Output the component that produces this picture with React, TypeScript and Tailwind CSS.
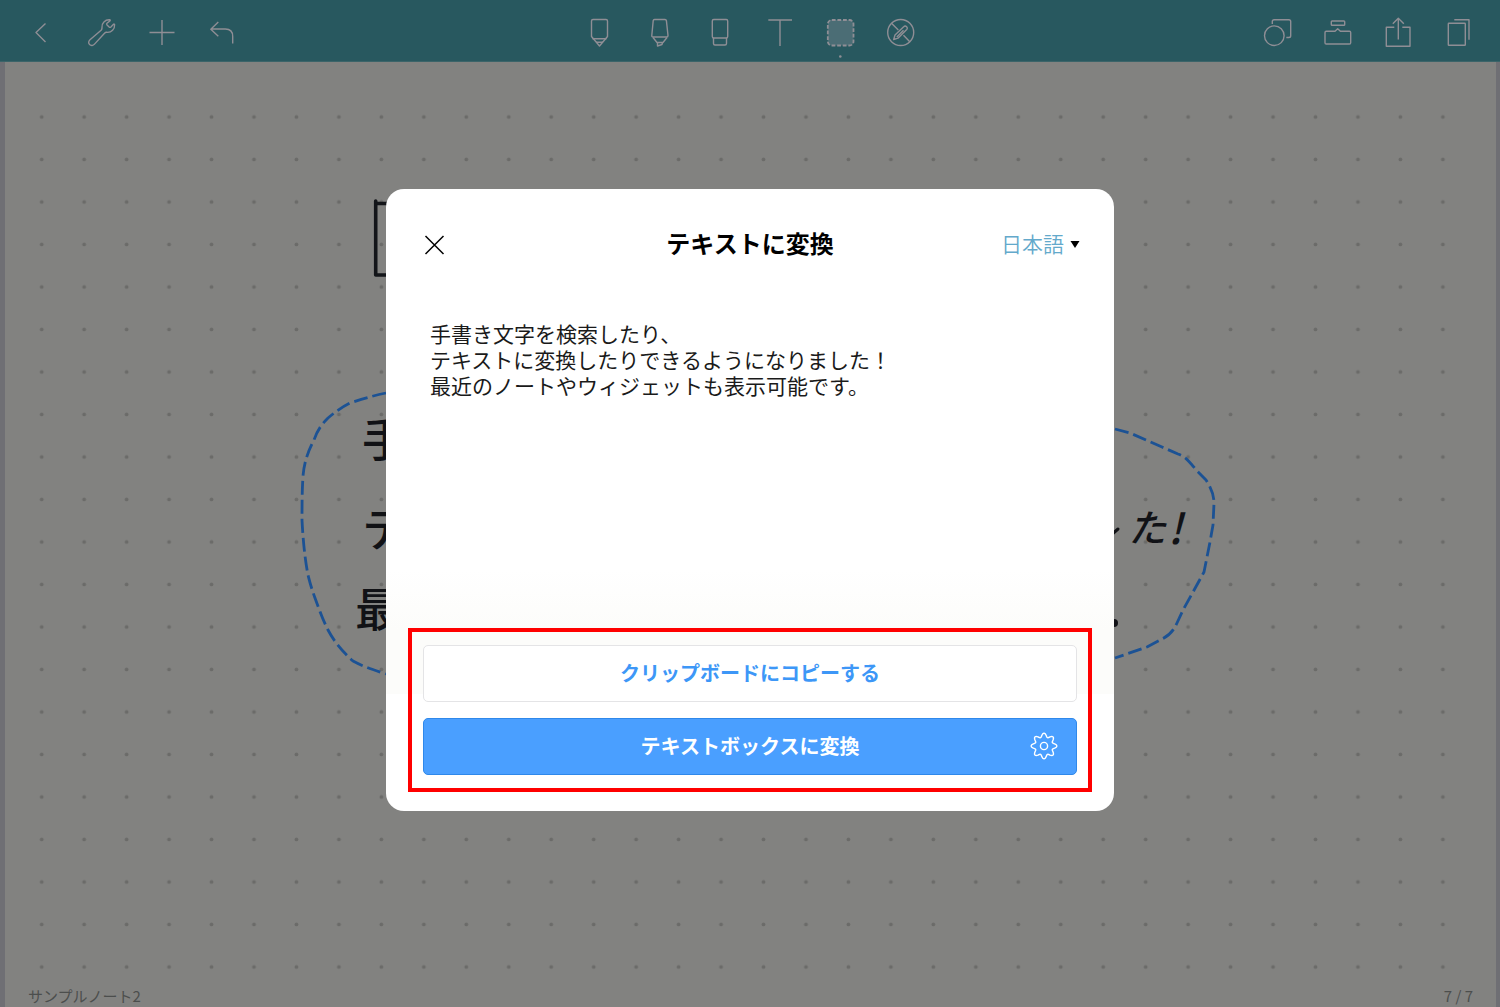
import React, { useState } from 'react';

interface Tool {
  label: string;
  icon: React.ReactNode;
}

const leftTools: Tool[] = [
  { label: '戻る', icon: <path d="M33.5 23.5 24 32.5l9.5 9.5" /> },
  {
    label: '設定',
    icon: (
      <path d="M37.6 19.8C33 19.6 29.500 23 30 27.500c.2 1.200-.2 2-.9 2.700L18 39.700c-1.700 1.500-1.700 3.600-.4 4.900 1.400 1.300 3.600 1.100 4.900-.5L32.500 33.200c.6-.7 1.300-1 2.400-.9 4.600.4 8-3.300 7.700-7.700-.1-.6-.7-.7-1.100-.3l-2.600 2.700c-.6.5-1.200.5-1.700.1l-2.200-2.200c-.5-.5-.5-1.200 0-1.700l2.900-2.300c.5-.4.4-1-.3-1.100z" />
    ),
  },
  { label: '追加', icon: <path d="M17.500 32.500h25M30 20v25" /> },
  { label: '元に戻す', icon: <path d="M26.300 22 18.800 29.200l7.500 7M18.800 29h14.500q7.400 0 7.400 7.400v7" /> },
];

const centerTools: Tool[] = [
  {
    label: 'ペン',
    icon: (
      <>
        <path d="M23 19.500h13q1.500 0 1.500 1.500v15.500L29.500 46 21.500 36.500V21q0-1.500 1.500-1.500z" />
        <path d="M22.500 38.700h14M26 42.300h7" />
      </>
    ),
  },
  {
    label: 'マーカー',
    icon: (
      <>
        <path d="M24.500 19.500h10.500q1.200 0 1.400 1.200L38 35.500q0 1.500-1.200 1.500H23q-1.300 0-1.200-1.500l1.400-14.800q.2-1.200 1.300-1.200z" />
        <path d="M23 37.500l4 5h6l4-5M27.500 42.500V46l4.500-1.500.5-2" />
      </>
    ),
  },
  {
    label: '消しゴム',
    icon: (
      <>
        <rect x="22.300" y="19.500" width="15.400" height="18.500" rx="1.500" />
        <path d="M23.500 38v5.500q0 1.500 1.500 1.500h10q1.500 0 1.500-1.500V38" />
      </>
    ),
  },
  { label: 'テキスト', icon: <path d="M18.300 20H42M30 20v26" /> },
  {
    label: '選択',
    icon: (
      <>
        <rect x="17.800" y="20" width="25.700" height="25.500" rx="4" fill="#4b6d75" strokeWidth="1.800" strokeDasharray="3.800 1.800" />
        <circle cx="30.300" cy="56.500" r="1.300" fill="currentColor" stroke="none" />
      </>
    ),
  },
  {
    label: '描画オフ',
    icon: (
      <>
        <circle cx="30.700" cy="32.500" r="13" />
        <path d="M21.500 23.300l6.800 6.800M33.500 35.300l6.500 6.700" />
        <path d="M23.700 39.500l1.300-4.500 8.700-8.300a2 2 0 0 1 3 2.900L28 38.200zM26.800 37l6.700-6.700" />
      </>
    ),
  },
];

const rightTools: Tool[] = [
  {
    label: '図形',
    icon: (
      <>
        <circle cx="26.300" cy="35.700" r="9.800" />
        <path d="M24.300 24v-2.500q0-1.800 1.800-1.800h14.800q1.800 0 1.800 1.800v14.200q0 1.800-1.800 1.800H38.300" />
      </>
    ),
  },
  {
    label: 'ツールボックス',
    icon: (
      <>
        <rect x="23.300" y="21" width="13.400" height="4.300" rx=".8" />
        <path d="M18.200 31.300h8.800l2.700-2.600 2.700 2.600h9.100q1.200 0 1.200 1.200v10.300q0 1.200-1.200 1.200H18.200Q17 44 17 42.800V32.500q0-1.200 1.200-1.200z" />
      </>
    ),
  },
  {
    label: '共有',
    icon: <path d="M26.300 27.300h-8v19H42v-19h-7.700M30.300 39.500V18.300M24.800 23.700l5.500-5.400 5.500 5.400" />,
  },
  {
    label: 'ページ一覧',
    icon: (
      <>
        <rect x="20.300" y="23.300" width="17" height="22" rx=".6" />
        <path d="M26.300 19.700H41v20" />
      </>
    ),
  },
];

function ToolGroup({ tools }: { tools: Tool[] }) {
  return (
    <div className="flex">
      {tools.map((tool) => (
        <button key={tool.label} type="button" aria-label={tool.label} className="text-[#8f8e95]">
          <svg
            width="60"
            height="62"
            viewBox="0 0 60 62"
            fill="none"
            stroke="currentColor"
            strokeWidth="1.400"
            strokeLinecap="butt"
            strokeLinejoin="round"
          >
            {tool.icon}
          </svg>
        </button>
      ))}
    </div>
  );
}

function GearIcon() {
  const points = Array.from({ length: 128 }, (_, i) => {
    const angle = (i / 128) * Math.PI * 2;
    const r = 10.9 + 1.9 * Math.cos(angle * 8);
    return `${(14 + r * Math.cos(angle)).toFixed(2)},${(14 + r * Math.sin(angle)).toFixed(2)}`;
  }).join(' ');

  return (
    <svg width="28" height="28" viewBox="0 0 28 28" fill="none" stroke="currentColor" strokeWidth="1.400">
      <polygon points={points} />
      <circle cx="14" cy="14" r="3.600" />
    </svg>
  );
}

// Dotted paper with the lasso selection and the ends of the handwritten lines
function NoteCanvas() {
  return (
    <svg
      className="absolute inset-0 h-full w-full"
      viewBox="5 62 1491 945"
      fill="none"
      strokeLinecap="round"
      strokeLinejoin="round"
    >
      <defs>
        <pattern id="dots" x="20.500" y="95.800" width="42.460" height="42.500" patternUnits="userSpaceOnUse">
          <circle cx="21.200" cy="21.200" r="1.900" fill="#6b6b69" />
        </pattern>
      </defs>
      <rect x="21" y="96" width="1443" height="892" fill="url(#dots)" />

      <path d="M420 203.500H376M375.700 201V275H420" stroke="#131519" strokeWidth="3.600" />

      <g className="font-['Noto_Sans_CJK_JP',sans-serif] font-medium" fill="#111216" fontSize="46">
        <text x="362" y="456">手</text>
        <text x="362" y="546">テ</text>
        <text x="355" y="626">最</text>
        <text x="1128" y="542" fontSize="38" className="italic">た</text>
        <text x="1168" y="544" fontSize="42" className="italic">!</text>
      </g>
      <path d="M1110 536L1118 529" stroke="#111216" strokeWidth="3" />
      <circle cx="1114" cy="623" r="4" fill="#111216" />

      <g stroke="#1c5294" strokeWidth="2.800" strokeDasharray="14 5" strokeLinecap="butt">
        <path d="M386 393C372 396 362 399 350 403C342 407 335 412 328 418C321 425 317 431 314 440C308 451 304 463 303 476C302 492 302 506 302 520C303 540 305 560 308 575C310 583 312 590 315 598C319 609 323 620 328 630C335 643 343 652 353 661C364 667 374 670 386 674" />
        <path d="M1115 429L1130 433L1162 447L1178 454C1187 457 1191 464 1197 471L1206 480C1210 486 1214 494 1214 503L1213 525L1210 542L1204 572L1193 592L1183 610L1177 623C1173 632 1168 636 1162 639L1147 647L1115 658" />
      </g>
    </svg>
  );
}

export default function App() {
  const [language, setLanguage] = useState('ja');

  return (
    <div className="relative flex min-h-screen flex-col font-['Noto_Sans_CJK_JP',sans-serif]">
      {/* Toolbar */}
      <header className="flex h-[62px] items-center justify-between border-b border-[#3b6469] bg-[#28585f] px-3">
        <ToolGroup tools={leftTools} />
        <ToolGroup tools={centerTools} />
        <ToolGroup tools={rightTools} />
      </header>

      {/* Note page */}
      <main className="relative flex flex-1 flex-col justify-end border-r-4 border-l-[5px] border-[#6f6f74] bg-[#828280]">
        <NoteCanvas />
        <footer className="relative flex justify-between px-[23px] pb-px text-[15px] leading-5 text-[#4c4e4d]">
          <span>サンプルノート2</span>
          <span>7 / 7</span>
        </footer>
      </main>

      {/* Conversion dialog */}
      <div className="absolute inset-0 flex items-center justify-center pb-2">
        <div
          role="dialog"
          aria-labelledby="dialog-title"
          className="flex min-h-[622px] w-[728px] max-w-full flex-col rounded-[18px] bg-[linear-gradient(#ffffff_380px,#fcfcfa_440px,#fcfcfa_505px,#ffffff_505px)] px-[22px] pb-[19px]"
        >
          <div className="grid h-28 grid-cols-[1fr_auto_1fr] items-center px-3">
            <button type="button" aria-label="閉じる" className="size-[30px] text-black">
              <svg viewBox="0 0 30 30" fill="none" stroke="currentColor" strokeWidth="1.500">
                <path d="M5.500 6l18 18M23.500 6l-18 18" />
              </svg>
            </button>
            <h1 id="dialog-title" className="pb-[3px] text-[24px] leading-8 font-bold text-black">
              テキストに変換
            </h1>
            <div className="flex items-center justify-end gap-[6px]">
              <select
                aria-label="言語"
                value={language}
                onChange={(e) => setLanguage(e.target.value)}
                className="appearance-none bg-transparent pb-[3px] text-[21px] leading-8 font-[350] text-[#63a9cb]"
              >
                <option value="ja">日本語</option>
              </select>
              <svg width="10" height="7" viewBox="0 0 10 7" fill="#000">
                <path d="M.5 0h9L5 7z" />
              </svg>
            </div>
          </div>

          <p className="grow px-[22px] pt-[19px] text-[21px] leading-[26px] text-[#1a1a1a]">
            手書き文字を検索したり、
            <br />
            テキストに変換したりできるようになりました！
            <br />
            最近のノートやウィジェットも表示可能です。
          </p>

          <div className="flex flex-col gap-4 border-4 border-[#ff0000] px-[11px] py-[13px]">
            <button
              type="button"
              className="h-[57px] rounded-[5px] border border-[#e4e4e6] bg-white text-[20px] font-bold text-[#3d97f7]"
            >
              クリップボードにコピーする
            </button>
            <div className="relative flex">
              <button
                type="button"
                className="h-[57px] grow rounded-[5px] border border-[#2f88ea] bg-[#4a9fff] text-[20px] font-bold text-white"
              >
                テキストボックスに変換
              </button>
              <button type="button" aria-label="変換の設定" className="absolute inset-y-0 right-[19px] text-white">
                <GearIcon />
              </button>
            </div>
          </div>
        </div>
      </div>
    </div>
  );
}
